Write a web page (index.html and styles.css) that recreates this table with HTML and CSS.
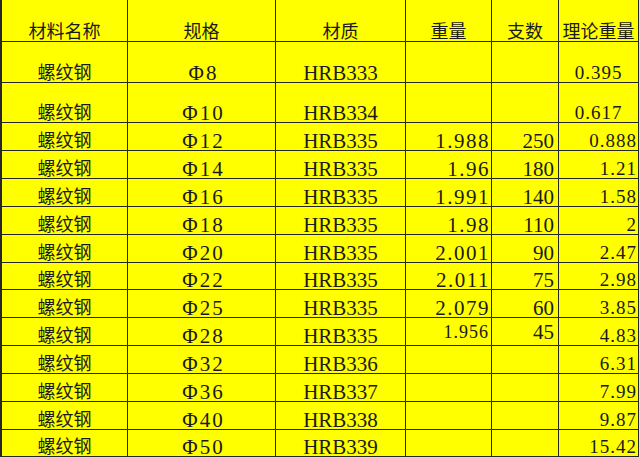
FILE: index.html
```html
<!DOCTYPE html>
<html lang="zh">
<head>
<meta charset="utf-8">
<title>螺纹钢理论重量表</title>
<link rel="stylesheet" href="styles.css">
</head>
<body>
<div class="sheet">
  <div class="c h">材料名称</div><div class="c h">规格</div><div class="c h">材质</div><div class="c h">重量</div><div class="c h">支数</div><div class="c h">理论重量</div>

  <div class="c cjk">螺纹钢</div><div class="c num spec">Φ8</div><div class="c num">HRB333</div><div class="c"></div><div class="c"></div><div class="c num sm dec">0.395</div>
  <div class="c cjk">螺纹钢</div><div class="c num spec">Φ10</div><div class="c num">HRB334</div><div class="c"></div><div class="c"></div><div class="c num sm dec">0.617</div>
  <div class="c cjk">螺纹钢</div><div class="c num spec">Φ12</div><div class="c num">HRB335</div><div class="c num wt">1.988</div><div class="c num cnt">250</div><div class="c num sm dec r">0.888</div>
  <div class="c cjk">螺纹钢</div><div class="c num spec">Φ14</div><div class="c num">HRB335</div><div class="c num wt">1.96</div><div class="c num cnt">180</div><div class="c num sm dec r">1.21</div>
  <div class="c cjk">螺纹钢</div><div class="c num spec">Φ16</div><div class="c num">HRB335</div><div class="c num wt">1.991</div><div class="c num cnt">140</div><div class="c num sm dec r">1.58</div>
  <div class="c cjk">螺纹钢</div><div class="c num spec">Φ18</div><div class="c num">HRB335</div><div class="c num wt">1.98</div><div class="c num cnt">110</div><div class="c num sm dec r">2</div>
  <div class="c cjk">螺纹钢</div><div class="c num spec">Φ20</div><div class="c num">HRB335</div><div class="c num wt">2.001</div><div class="c num cnt">90</div><div class="c num sm dec r">2.47</div>
  <div class="c cjk">螺纹钢</div><div class="c num spec">Φ22</div><div class="c num">HRB335</div><div class="c num wt">2.011</div><div class="c num cnt">75</div><div class="c num sm dec r">2.98</div>
  <div class="c cjk">螺纹钢</div><div class="c num spec">Φ25</div><div class="c num">HRB335</div><div class="c num wt">2.079</div><div class="c num cnt">60</div><div class="c num sm dec r">3.85</div>
  <div class="c cjk">螺纹钢</div><div class="c num spec">Φ28</div><div class="c num">HRB335</div><div class="c num wt xs mid">1.956</div><div class="c num cnt mid">45</div><div class="c num sm dec r">4.83</div>
  <div class="c cjk">螺纹钢</div><div class="c num spec">Φ32</div><div class="c num">HRB336</div><div class="c"></div><div class="c"></div><div class="c num sm dec r">6.31</div>
  <div class="c cjk">螺纹钢</div><div class="c num spec">Φ36</div><div class="c num">HRB337</div><div class="c"></div><div class="c"></div><div class="c num sm dec r">7.99</div>
  <div class="c cjk">螺纹钢</div><div class="c num spec">Φ40</div><div class="c num">HRB338</div><div class="c"></div><div class="c"></div><div class="c num sm dec r">9.87</div>
  <div class="c cjk">螺纹钢</div><div class="c num spec">Φ50</div><div class="c num">HRB339</div><div class="c"></div><div class="c"></div><div class="c num sm dec r">15.42</div>
</div>
</body>
</html>
```

FILE: styles.css
```css
html {
  background: #d9d9d9;
}
body {
  margin: 0;
  background: #ffff00;
  width: 640px;
}
.sheet {
  display: grid;
  grid-template-columns: 125px 147px 129px 85px 66px 79px;
  grid-template-rows: 41px 40px 39px 27px 27px 27px 27px 27px 26px 27px 27px 27px 27px 27px 26px;
  gap: 1px;
  padding: 0 1px 1px 2px;
  width: 639px;
  box-sizing: border-box;
  background: #262626;
}
.c {
  background: #ffff00;
  color: #1a1a1a;
  display: flex;
  align-items: flex-end;
  justify-content: center;
  white-space: nowrap;
}
.h, .cjk {
  font-family: "Noto Sans CJK SC", sans-serif;
  font-size: 18px;
  line-height: 18px;
  padding-bottom: 2px;
}
.num {
  font-family: "Liberation Serif", serif;
  font-size: 21px;
  line-height: 18px;
}
.spec {
  letter-spacing: 2px;
  padding-left: 4px;
}
.wt {
  justify-content: flex-end;
  letter-spacing: 1.5px;
  padding-right: 1px;
}
.cnt {
  justify-content: flex-end;
  padding-right: 4px;
}
.sm {
  font-size: 19px;
}
.dec {
  letter-spacing: 1px;
}
.xs {
  font-size: 18px;
  letter-spacing: 1px;
  padding-right: 2px;
}
.r {
  justify-content: flex-end;
  padding-right: 1px;
}
.mid {
  align-items: center;
}
```
